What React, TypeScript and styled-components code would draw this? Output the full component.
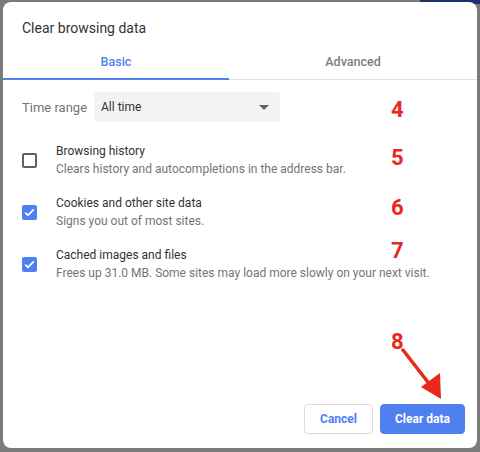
import styled, { createGlobalStyle } from 'styled-components'

const GlobalStyle = createGlobalStyle`
  html, body {
    margin: 0;
    padding: 0;
  }
  body {
    width: 480px;
    height: 452px;
    overflow: hidden;
    background:
      linear-gradient(#1f2f6a, #1f2f6a) 420px 0 / 60px 4px no-repeat,
      #7b7b7b;
    font-family: Roboto, "Liberation Sans", sans-serif;
  }
`

const rows = [
  { title: 'Browsing history', sub: 'Clears history and autocompletions in the address bar.', checked: false },
  { title: 'Cookies and other site data', sub: 'Signs you out of most sites.', checked: true },
  { title: 'Cached images and files', sub: 'Frees up 31.0 MB. Some sites may load more slowly on your next visit.', checked: true },
]

const marks = [
  { n: '4', top: 96 },
  { n: '5', top: 144 },
  { n: '6', top: 194 },
  { n: '7', top: 237 },
  { n: '8', top: 328 },
]

export default function App() {
  return (
    <>
      <GlobalStyle />
      <Dialog>
        <Title>Clear browsing data</Title>
        <Tabs>
          <Tab $active $width={226}>Basic</Tab>
          <Tab $width={248}>Advanced</Tab>
        </Tabs>
        <Body>
          <TimeRow>
            <Label>Time range</Label>
            <Select>
              <span>All time</span>
              <Caret />
            </Select>
          </TimeRow>
          {rows.map((r) => (
            <CheckRow key={r.title}>
              <Box $checked={r.checked}>
                {r.checked && (
                  <svg width="11" height="9" viewBox="0 0 11 9">
                    <path d="M1.2 4.6 L4 7.3 L9.8 1.4" fill="none" stroke="#fff" strokeWidth="1.8" />
                  </svg>
                )}
              </Box>
              <Texts>
                <RowTitle>{r.title}</RowTitle>
                <RowSub>{r.sub}</RowSub>
              </Texts>
            </CheckRow>
          ))}
        </Body>
        <Footer>
          <Button $width={69}>Cancel</Button>
          <Button $primary $width={85}>Clear data</Button>
        </Footer>
        {marks.map((m) => (
          <Mark key={m.n} style={{ top: m.top }}>
            {m.n}
          </Mark>
        ))}
        <Arrow width="60" height="60" viewBox="0 0 60 60">
          <line x1="2" y1="2" x2="33" y2="42" stroke="#e8281a" strokeWidth="3.5" strokeLinecap="round" />
          <polygon points="40,51 20,39 39,25" fill="#e8281a" />
        </Arrow>
      </Dialog>
    </>
  )
}

const Dialog = styled.div`
  position: relative;
  box-sizing: border-box;
  margin: 2px 0 0 3px;
  width: 474px;
  height: 446px;
  background: #fff;
  border-radius: 8px;
  display: flex;
  flex-direction: column;
`

const Title = styled.div`
  padding: 16px 19px 0;
  height: 27px;
  font-size: 14px;
  line-height: 20px;
  color: #333;
`

const Tabs = styled.div`
  display: flex;
  border-bottom: 1px solid #e0e0e0;
`

const Tab = styled.div<{ $active?: boolean; $width: number }>`
  width: ${(p) => p.$width}px;
  height: 35px;
  box-sizing: border-box;
  display: flex;
  align-items: center;
  justify-content: center;
  font-size: 12.5px;
  font-weight: 500;
  color: ${(p) => (p.$active ? '#4f80f0' : '#7d7d7d')};
  border-bottom: 2px solid ${(p) => (p.$active ? '#4f80f0' : 'transparent')};
  margin-bottom: -1px;
`

const Body = styled.div`
  padding: 12px 19px 0;
  flex: 1;
`

const TimeRow = styled.div`
  display: flex;
  align-items: center;
  margin-bottom: 12px;
`

const Label = styled.span`
  width: 72px;
  font-size: 13px;
  color: #757575;
`

const Select = styled.div`
  width: 186px;
  height: 30px;
  box-sizing: border-box;
  background: #f1f3f4;
  border-radius: 4px;
  padding: 0 8px 0 7px;
  display: flex;
  align-items: center;
  justify-content: space-between;
  font-size: 12px;
  color: #333;
`

const Caret = styled.span`
  width: 0;
  height: 0;
  margin-right: 3px;
  border-left: 5px solid transparent;
  border-right: 5px solid transparent;
  border-top: 5px solid #5f6368;
`

const CheckRow = styled.div`
  display: flex;
  align-items: center;
  gap: 19px;
  padding: 8px 0;
`

const Box = styled.div<{ $checked: boolean }>`
  width: 15px;
  height: 15px;
  box-sizing: border-box;
  border-radius: 2px;
  display: flex;
  align-items: center;
  justify-content: center;
  background: ${(p) => (p.$checked ? '#4f80f0' : '#fff')};
  border: ${(p) => (p.$checked ? 'none' : '2px solid #5f6368')};
`

const Texts = styled.div`
  display: flex;
  flex-direction: column;
`

const RowTitle = styled.span`
  font-size: 12px;
  line-height: 18px;
  color: #333;
`

const RowSub = styled.span`
  font-size: 12px;
  line-height: 18px;
  color: #757575;
`

const Footer = styled.div`
  display: flex;
  justify-content: flex-end;
  gap: 7px;
  padding: 0 12px 14px;
`

const Button = styled.button<{ $primary?: boolean; $width: number }>`
  width: ${(p) => p.$width}px;
  height: 30px;
  box-sizing: border-box;
  padding: 0;
  border-radius: 4px;
  font-family: Roboto, "Liberation Sans", sans-serif;
  font-size: 12px;
  font-weight: 700;
  border: 1px solid ${(p) => (p.$primary ? '#4f80f0' : '#dadce0')};
  background: ${(p) => (p.$primary ? '#4f80f0' : '#fff')};
  color: ${(p) => (p.$primary ? '#fff' : '#4f80f0')};
`

const Mark = styled.div`
  position: absolute;
  left: 388px;
  font-family: Roboto, "Liberation Sans", sans-serif;
  font-size: 22px;
  line-height: 24px;
  font-weight: 700;
  color: #e8281a;
`

const Arrow = styled.svg`
  position: absolute;
  left: 398px;
  top: 346px;
`
